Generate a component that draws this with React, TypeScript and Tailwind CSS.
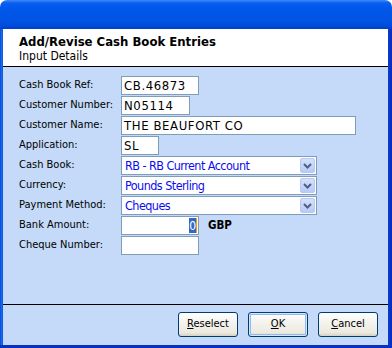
import React from "react";

function TextBox({ value, w }: { value?: string; w: string }) {
  return (
    <div
      className={`${w} h-[19px] bg-white border border-[#7f9db9] flex items-center pl-[2px] font-['DejaVu_Sans',sans-serif] text-[13px] tracking-[0.6px] leading-[15px] text-black whitespace-nowrap`}
    >
      {value}
    </div>
  );
}

function Select({ value }: { value: string }) {
  return (
    <div className="w-[196px] h-[19px] bg-white border border-[#7f9db9] flex items-center pl-[3px] pr-[1px] font-['DejaVu_Sans',sans-serif] text-[12.5px] tracking-[-0.55px] leading-[15px] text-[#0c0cf0]">
      <span className="flex-1 whitespace-nowrap">{value}</span>
      <div className="w-[15px] h-[15px] shrink-0 rounded-[2px] border border-[#b9c9f3] bg-[linear-gradient(to_bottom,#d4e0fb,#b8caf6)] flex items-center justify-center">
        <svg width="9" height="6" viewBox="0 0 9 6">
          <path d="M1 1 L4.5 4.5 L8 1" fill="none" stroke="#4d6185" strokeWidth="2" />
        </svg>
      </div>
    </div>
  );
}

function Row({ label, children }: { label: string; children: React.ReactNode }) {
  return (
    <div className="h-[20px] flex items-start">
      <div className="w-[102px] h-[19px] flex items-center whitespace-nowrap">{label}</div>
      {children}
    </div>
  );
}

function Btn({ children, def }: { children: React.ReactNode; def?: boolean }) {
  return (
    <div
      className={`w-[60px] h-[25px] rounded-[3px] border border-[#003c74] bg-[linear-gradient(to_bottom,#ffffff_0%,#f4f3ee_40%,#ece9df_85%,#d6d0c5_100%)] flex items-center justify-center text-black ${
        def ? "shadow-[inset_0_0_0_1px_#cee7ff,inset_0_0_0_2px_#98b8ea]" : ""
      }`}
    >
      {children}
    </div>
  );
}

export default function App() {
  return (
    <div className="w-[392px] h-[348px] bg-white flex flex-col font-['DejaVu_Sans',sans-serif] [font-stretch:condensed] text-[11px] text-black">
      <div className="h-[29px] shrink-0 rounded-t-[7px] bg-[linear-gradient(to_bottom,#3d8af7_0px,#0a5ef0_3px,#0057ea_8px,#0054e4_20px,#004bd9_26px,#0040c8_29px)]" />
      <div className="flex flex-1 min-h-0">
        <div className="w-[3px] bg-[linear-gradient(to_right,#0a47d6,#1868ee,#0c53e2)]" />
        <div className="flex-1 flex flex-col bg-[#c4daf8]">
          <div className="h-[38px] shrink-0 bg-white border-b border-black pl-[16px] pt-[5px] flex flex-col">
            <div className="font-bold text-[13px] leading-[15px]">Add/Revise Cash Book Entries</div>
            <div className="text-[12px] leading-[14px]">Input Details</div>
          </div>
          <div className="flex-1 pl-[16px] pt-[9px] flex flex-col">
            <Row label="Cash Book Ref:">
              <TextBox value="CB.46873" w="w-[78px]" />
            </Row>
            <Row label="Customer Number:">
              <TextBox value="N05114" w="w-[69px]" />
            </Row>
            <Row label="Customer Name:">
              <TextBox value="THE BEAUFORT CO" w="w-[235px]" />
            </Row>
            <Row label="Application:">
              <TextBox value="SL" w="w-[38px]" />
            </Row>
            <Row label="Cash Book:">
              <Select value="RB - RB Current Account" />
            </Row>
            <Row label="Currency:">
              <Select value="Pounds Sterling" />
            </Row>
            <Row label="Payment Method:">
              <Select value="Cheques" />
            </Row>
            <Row label="Bank Amount:">
              <div className="w-[78px] h-[19px] bg-white border border-[#7f9db9] flex items-center justify-end pr-[1px] font-['DejaVu_Sans',sans-serif] text-[12px] leading-none">
                <span className="bg-[#316ac5] text-white h-[15px] flex items-center">0</span>
                <span className="w-[1px] h-[15px] bg-[#e8a020]" />
              </div>
              <div className="h-[19px] flex items-center ml-[9px] font-bold text-[11.5px]">GBP</div>
            </Row>
            <Row label="Cheque Number:">
              <TextBox w="w-[78px]" />
            </Row>
          </div>
          <div className="h-[41px] shrink-0 border-t border-black flex justify-end items-start pt-[7px] pr-[10px] gap-[10px]">
            <Btn>
              <span>
                <span className="underline">R</span>eselect
              </span>
            </Btn>
            <Btn def>
              <span>
                <span className="underline">O</span>K
              </span>
            </Btn>
            <Btn>
              <span>
                <span className="underline">C</span>ancel
              </span>
            </Btn>
          </div>
        </div>
        <div className="w-[4px] bg-[linear-gradient(to_right,#0a3fd0,#0831c4,#0a2fb8)]" />
      </div>
      <div className="h-[3px] shrink-0 bg-[#0831c4]" />
    </div>
  );
}
